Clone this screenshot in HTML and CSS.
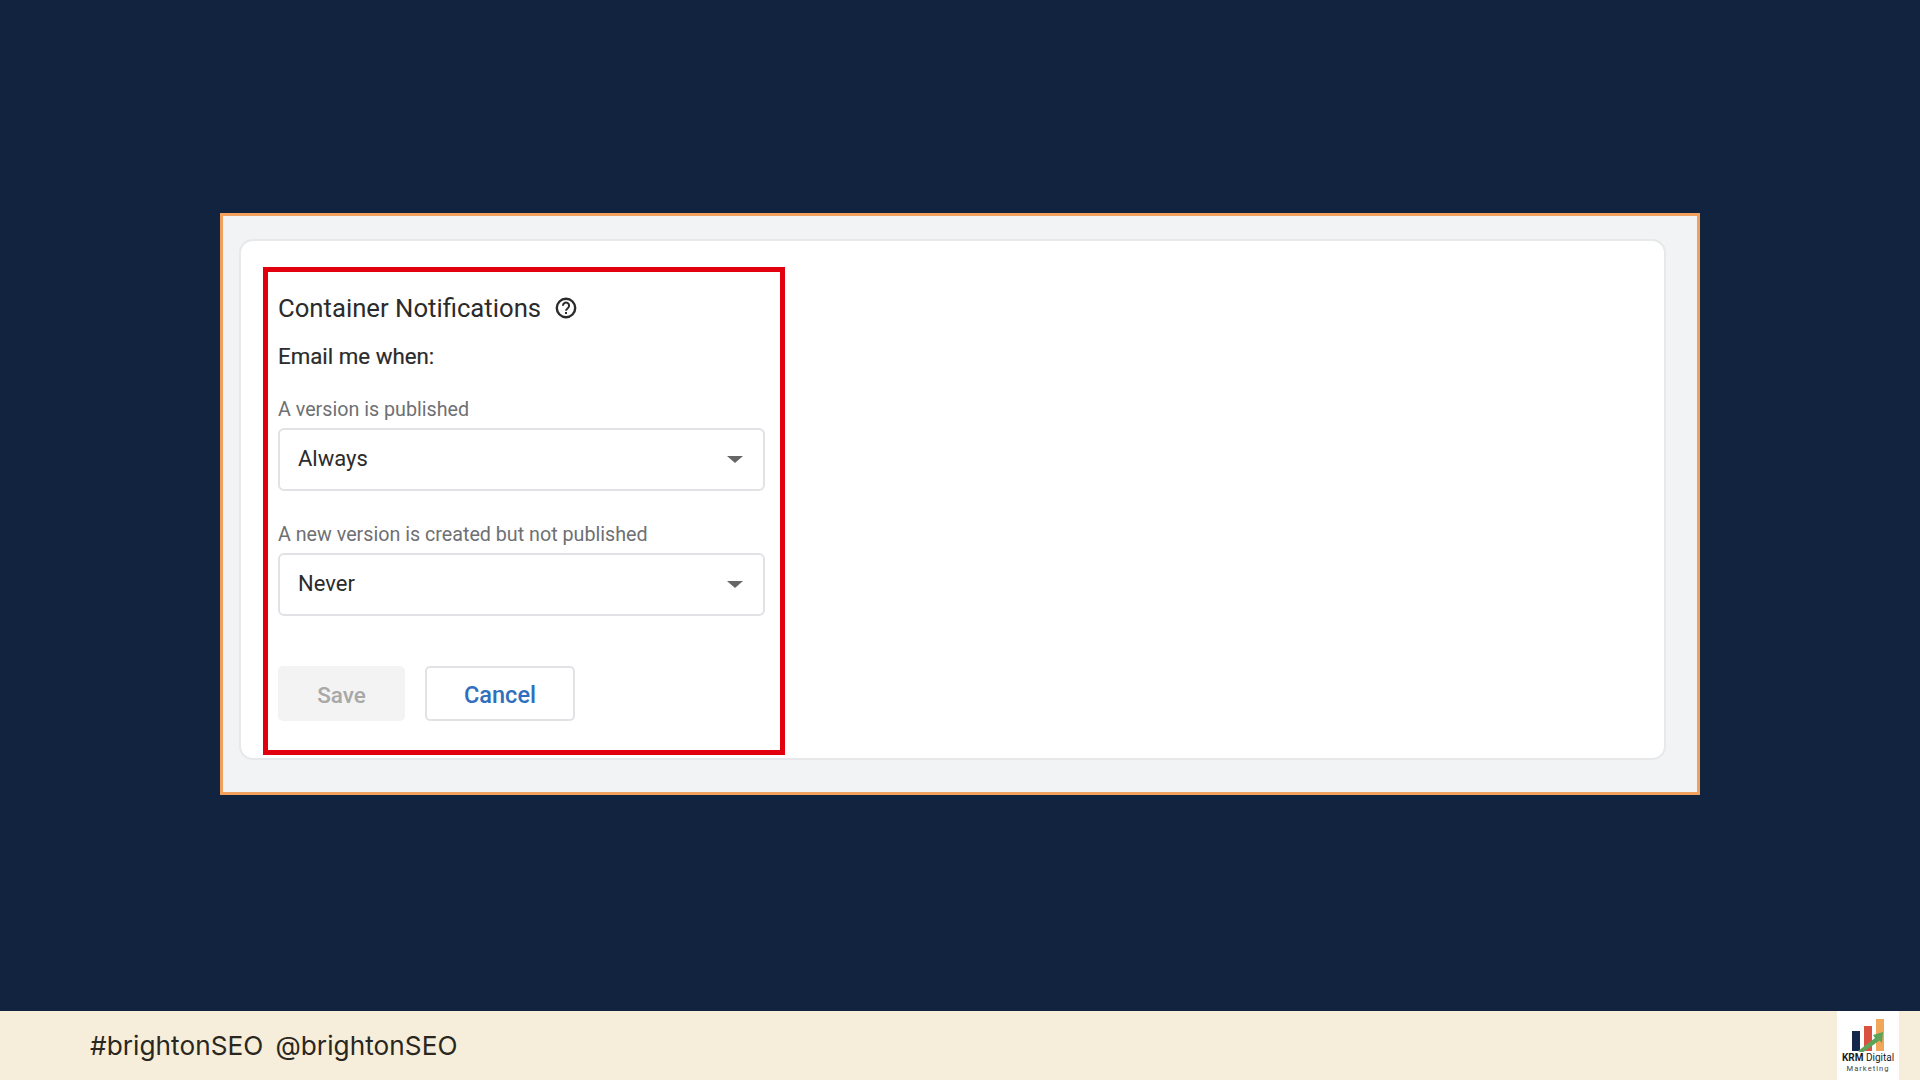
FILE: index.html
```html
<!DOCTYPE html>
<html lang="en">
<head>
<meta charset="utf-8">
<title>Container Notifications</title>
<link rel="stylesheet" href="styles.css">
</head>
<body>
<main class="stage">
  <section class="frame">
    <div class="card">
      <div class="highlight">
        <div class="title-row">
          <h1 class="title">Container Notifications</h1>
          <svg class="help" viewBox="0 0 24 24" width="24" height="24" aria-hidden="true">
            <circle cx="12" cy="12" r="9.2" fill="none" stroke="#2b2b2b" stroke-width="2.4"/>
            <path d="M8.9 9.7a3.1 3.1 0 1 1 4.9 2.5c-1.1.8-1.8 1.3-1.8 2.6" fill="none" stroke="#2b2b2b" stroke-width="2"/>
            <rect x="11" y="16" width="2" height="2" fill="#2b2b2b"/>
          </svg>
        </div>
        <p class="subtitle">Email me when:</p>
        <label class="field-label">A version is published</label>
        <div class="select">
          <span class="select-value">Always</span>
          <span class="caret"></span>
        </div>
        <label class="field-label second">A new version is created but not published</label>
        <div class="select">
          <span class="select-value">Never</span>
          <span class="caret"></span>
        </div>
        <div class="actions">
          <button class="btn btn-save" type="button">Save</button>
          <button class="btn btn-cancel" type="button">Cancel</button>
        </div>
      </div>
    </div>
  </section>
</main>
<footer class="footer">
  <div class="tags"><span>#brightonSEO</span><span>@brightonSEO</span></div>
  <div class="logo">
    <svg class="logo-mark" viewBox="0 0 40 34" width="40" height="34" aria-hidden="true">
      <rect x="4" y="13" width="8" height="20" fill="#14264a"/>
      <rect x="16" y="8" width="8" height="25" fill="#d9523f"/>
      <rect x="28" y="1" width="8" height="32" fill="#f2a65a"/>
      <path d="M10 33 L27 20 L25 17 L35 14 L34 25 L31.5 22.5 L14 35 Z" fill="#5fa35a"/>
    </svg>
    <div class="logo-name"><b>KRM</b> Digital</div>
    <div class="logo-sub">Marketing</div>
  </div>
</footer>
</body>
</html>
```
FILE: styles.css
```css
* { box-sizing: border-box; }
html, body { margin: 0; height: 100%; }
body {
  display: flex;
  flex-direction: column;
  height: 1080px;
  background: #12233f;
  font-family: Roboto, "Liberation Sans", sans-serif;
  overflow: hidden;
}
.stage {
  flex: 1;
  padding: 213px 0 0 220px;
}
.frame {
  width: 1480px;
  height: 582px;
  border: 3px solid #f2a05e;
  background: #f1f3f4;
  padding: 23px 31px 0 16px;
}
.card {
  height: 521px;
  background: #fff;
  border: 2px solid #e6e8ea;
  border-radius: 14px;
  padding: 26px 0 0 22px;
}
.highlight {
  width: 522px;
  height: 488px;
  border: 5px solid #e2000f;
  padding: 0 0 0 10px;
}
.title-row {
  display: flex;
  align-items: center;
  gap: 13px;
  height: 36px;
  margin-top: 18px;
}
.title {
  margin: 0;
  font-size: 25.7px;
  font-weight: 400;
  color: #2b2b2b;
  white-space: nowrap;
}
.help { flex: none; }
.subtitle {
  margin: 16px 0 0;
  font-size: 22.3px;
  line-height: 28px;
  font-weight: 400;
  color: #2b2b2b;
  -webkit-text-stroke: 0.2px #2b2b2b;
}
.field-label {
  display: block;
  margin-top: 27px;
  font-size: 19.7px;
  line-height: 26px;
  color: #6e7073;
}
.field-label.second { margin-top: 31px; }
.select {
  display: flex;
  align-items: center;
  justify-content: space-between;
  width: 487px;
  height: 63px;
  margin-top: 5px;
  padding: 0 20px 0 18px;
  border: 2px solid #e0e2e5;
  border-radius: 6px;
  font-size: 22px;
  color: #2b2b2b;
}
.select-value { margin-bottom: 3px; }
.caret {
  width: 0;
  height: 0;
  border-left: 8px solid transparent;
  border-right: 8px solid transparent;
  border-top: 7px solid #666;
}
.actions {
  display: flex;
  gap: 20px;
  margin-top: 50px;
}
.btn {
  height: 55px;
  border-radius: 5px;
  font-family: inherit;
  font-weight: 500;
  padding: 2px 0 0;
}
.btn-save {
  width: 127px;
  background: #f3f3f3;
  border: 0;
  color: #a8a8a8;
  font-size: 22.5px;
}
.btn-cancel {
  width: 150px;
  background: #fff;
  border: 2px solid #e0e2e5;
  color: #2f6fbd;
  font-size: 23.5px;
}
.footer {
  flex: none;
  display: flex;
  align-items: stretch;
  justify-content: space-between;
  height: 69px;
  background: #f6eedb;
  padding: 0 21px 0 90px;
}
.tags {
  display: flex;
  align-items: center;
  gap: 12px;
  font-family: Inter, "Liberation Sans", sans-serif;
  font-size: 26.2px;
  letter-spacing: 0.05px;
  color: #2a2720;
}
.logo {
  width: 62px;
  background: #fff;
  display: flex;
  flex-direction: column;
  align-items: center;
  padding-top: 7px;
  color: #1c1c1c;
}
.logo-mark { flex: none; }
.logo-name {
  font-size: 10px;
  line-height: 12px;
  white-space: nowrap;
}
.logo-sub {
  font-size: 7.6px;
  line-height: 10px;
  letter-spacing: 1px;
  color: #444;
}
```
